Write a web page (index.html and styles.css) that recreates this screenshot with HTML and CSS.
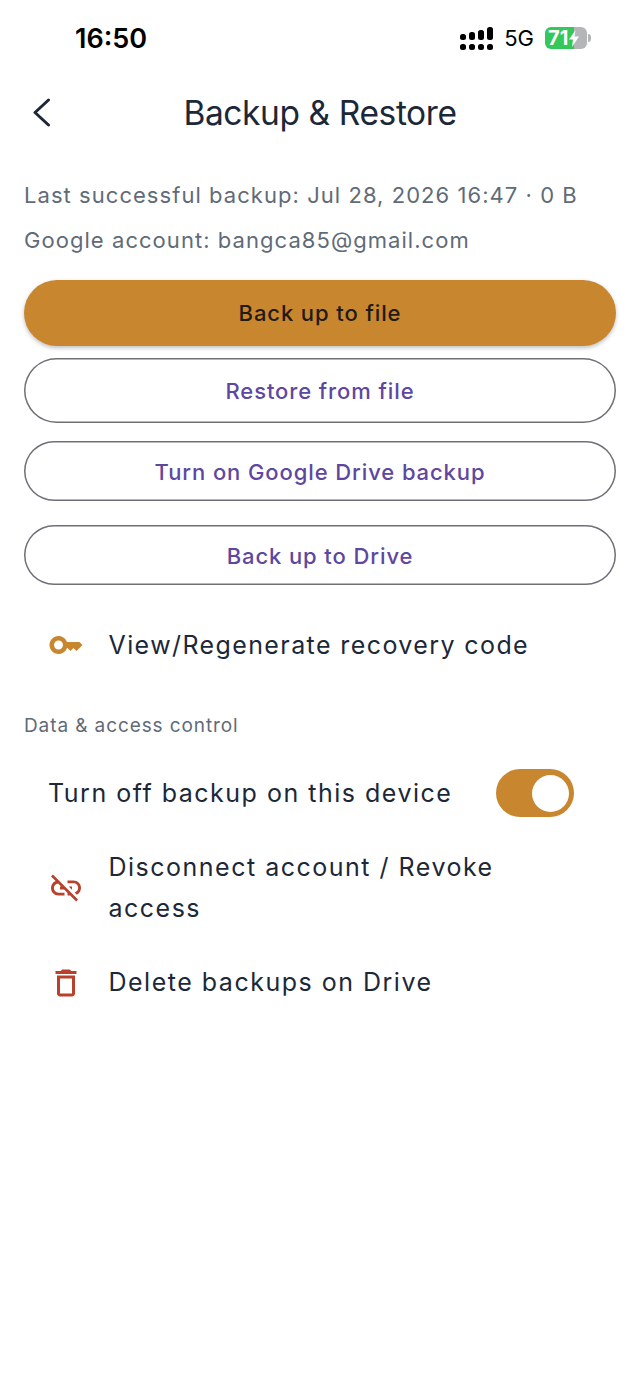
FILE: index.html
```html
<!DOCTYPE html>
<html lang="en">
<head>
  <meta charset="UTF-8">
  <title>Backup &amp; Restore</title>
  <link rel="stylesheet" href="styles.css">
</head>
<body>
  <div class="status-bar">
    <span class="clock">16:50</span>
    <div class="status-right">
      <svg class="signal" width="33" height="23" viewBox="0 0 33 23" fill="#000">
        <rect x="0" y="7" width="6" height="6" rx="2.500"/>
        <rect x="0" y="17" width="6" height="6" rx="2.500"/>
        <rect x="9" y="5" width="6" height="8" rx="2.500"/>
        <rect x="9" y="17" width="6" height="6" rx="2.500"/>
        <rect x="18" y="3" width="6" height="10" rx="2.500"/>
        <rect x="18" y="17" width="6" height="6" rx="2.500"/>
        <rect x="27" y="0" width="6" height="13" rx="2.500"/>
        <rect x="27" y="17" width="6" height="6" rx="2.500"/>
      </svg>
      <span class="network">5G</span>
      <div class="battery">
        <span class="battery-level">71</span>
        <svg class="bolt" width="10" height="17" viewBox="0 0 10 17" fill="#fff"><path d="M6.500 0 0 9.500h4L3 17l7-10.500H5.500z"/></svg>
      </div>
      <span class="battery-tip"></span>
    </div>
  </div>

  <div class="header">
    <svg class="back" width="20" height="30" viewBox="0 0 20 30" fill="none" stroke="#1c2838" stroke-width="3" stroke-linecap="round" stroke-linejoin="round"><path d="M16.500 2 3 14.500 16.500 27"/></svg>
    <h1>Backup &amp; Restore</h1>
  </div>

  <div class="content">
    <p class="info">Last successful backup: Jul 28, 2026 16:47 · 0 B</p>
    <p class="info">Google account: bangca85@gmail.com</p>

    <button class="btn btn-primary">Back up to file</button>
    <button class="btn btn-outline btn-tall">Restore from file</button>
    <button class="btn btn-outline">Turn on Google Drive backup</button>
    <button class="btn btn-outline">Back up to Drive</button>

    <div class="row row-key">
      <svg class="icon icon-key" width="36" height="36" viewBox="0 0 24 24">
        <path d="M21 10h-8.350C11.830 7.670 9.610 6 7 6c-3.310 0-6 2.690-6 6s2.690 6 6 6c2.610 0 4.830-1.670 5.650-4H13l2 2 2-2 2 2 4-4.040L21 10zM7 15c-1.650 0-3-1.350-3-3s1.350-3 3-3 3 1.350 3 3-1.350 3-3 3z"/>
      </svg>
      <span>View/Regenerate recovery code</span>
    </div>

    <div class="section-label">Data &amp; access control</div>

    <div class="row-toggle">
      <span>Turn off backup on this device</span>
      <div class="toggle"><div class="knob"></div></div>
    </div>

    <div class="row row-unlink">
      <svg class="icon icon-danger" width="36" height="36" viewBox="0 0 24 24">
        <path d="M17 7h-4v1.900h4c1.710 0 3.100 1.390 3.100 3.100 0 1.430-.970 2.630-2.290 2.980l1.460 1.460C20.880 15.610 22 13.950 22 12c0-2.760-2.240-5-5-5zm-1 4h-2.190l2 2H16zM2 4.270l3.110 3.110C3.290 8.120 2 9.910 2 12c0 2.760 2.240 5 5 5h4v-1.900H7c-1.710 0-3.100-1.390-3.100-3.100 0-1.590 1.210-2.900 2.760-3.070L8.730 11H8v2h2.730L13 15.270V17h1.730l4.010 4L20 19.740 3.270 3 2 4.270z"/>
      </svg>
      <span>Disconnect account / Revoke access</span>
    </div>

    <div class="row row-trash">
      <svg class="icon icon-danger" width="36" height="36" viewBox="0 0 24 24">
        <path d="M16 9v10H8V9h8m-1.500-6h-5l-1 1H5v2h14V4h-3.500l-1-1zM18 7H6v12c0 1.100.9 2 2 2h8c1.100 0 2-.9 2-2V7z"/>
      </svg>
      <span>Delete backups on Drive</span>
    </div>
  </div>
</body>
</html>
```

FILE: styles.css
```css
* {
  box-sizing: border-box;
}

body {
  margin: 0;
  background: #fff;
  font-family: Inter, 'Noto Sans', sans-serif;
  color: #1c2838;
}

.status-bar {
  height: 76px;
  padding: 0 49px 0 75px;
  display: flex;
  justify-content: space-between;
  align-items: center;
}

.clock {
  font-size: 27px;
  font-weight: 600;
  color: #000;
}

.status-right {
  display: flex;
  align-items: center;
}

.signal {
  margin-right: 11px;
}

.network {
  font-size: 22px;
  color: #000;
  margin-right: 11px;
}

.battery {
  width: 42px;
  height: 22px;
  background: linear-gradient(to right, #34c759 69%, #b3b5b8 69%);
  border-radius: 6px;
  display: flex;
  align-items: center;
  padding-left: 3px;
}

.battery-level {
  color: #fff;
  font-size: 20px;
  font-weight: 700;
}

.bolt {
  flex: none;
  margin-left: 1px;
}

.battery-tip {
  width: 3px;
  height: 8px;
  margin-left: 1px;
  background: #b3b5b8;
  border-radius: 0 3px 3px 0;
}

.header {
  height: 74px;
  position: relative;
  display: flex;
  align-items: center;
  justify-content: center;
}

.header h1 {
  margin: 0;
  font-size: 33.5px;
  font-weight: 400;
  letter-spacing: -0.4px;
}

.back {
  position: absolute;
  left: 32px;
  top: 22px;
}

.content {
  padding: 23px 24px 0;
}

.info {
  margin: 0;
  height: 45px;
  line-height: 45px;
  font-size: 22px;
  letter-spacing: 1.05px;
  color: #5f6b78;
  white-space: nowrap;
}

.btn {
  display: block;
  width: 100%;
  height: 60px;
  margin-bottom: 24px;
  padding: 2px 0 0;
  border: none;
  border-radius: 30px;
  font-family: inherit;
  font-size: 22px;
  font-weight: 500;
  letter-spacing: 0.9px;
  background: #fff;
}

.btn-primary {
  height: 66px;
  margin-top: 17px;
  margin-bottom: 12px;
  padding: 0;
  border-radius: 33px;
  background: #c8862e;
  color: #1f1b16;
  box-shadow: 0 2px 4px rgba(0, 0, 0, 0.25);
}

.btn-outline {
  box-shadow: inset 0 0 0 1.5px #6e6f78;
  color: #5f479f;
}

.btn-tall {
  height: 65px;
  margin-bottom: 18px;
  padding: 0;
  border-radius: 33px;
}

.row {
  display: flex;
  align-items: center;
  font-size: 25px;
  letter-spacing: 1.5px;
  line-height: 41px;
}

.icon {
  flex: none;
  margin-left: 23.5px;
  margin-right: 25px;
}

.icon-key {
  fill: #c8862e;
}

.icon-danger {
  fill: #b8412b;
}

.row-key {
  height: 60px;
  margin-top: 30px;
  letter-spacing: 1.4px;
}

.section-label {
  margin-top: 39px;
  font-size: 19px;
  letter-spacing: 0.9px;
  color: #5f6b78;
}

.row-toggle {
  display: flex;
  align-items: center;
  justify-content: space-between;
  height: 48px;
  margin-top: 32px;
  padding: 0 42px 0 24px;
  font-size: 25px;
  letter-spacing: 1.5px;
}

.toggle {
  width: 78px;
  height: 48px;
  border-radius: 24px;
  background: #c8862e;
  padding: 5.5px 5px;
  display: flex;
  justify-content: flex-end;
}

.knob {
  width: 37px;
  height: 37px;
  border-radius: 50%;
  background: #fff;
}

.row-unlink {
  margin-top: 30px;
  padding-right: 100px;
}

.row-trash {
  margin-top: 33px;
}
```
